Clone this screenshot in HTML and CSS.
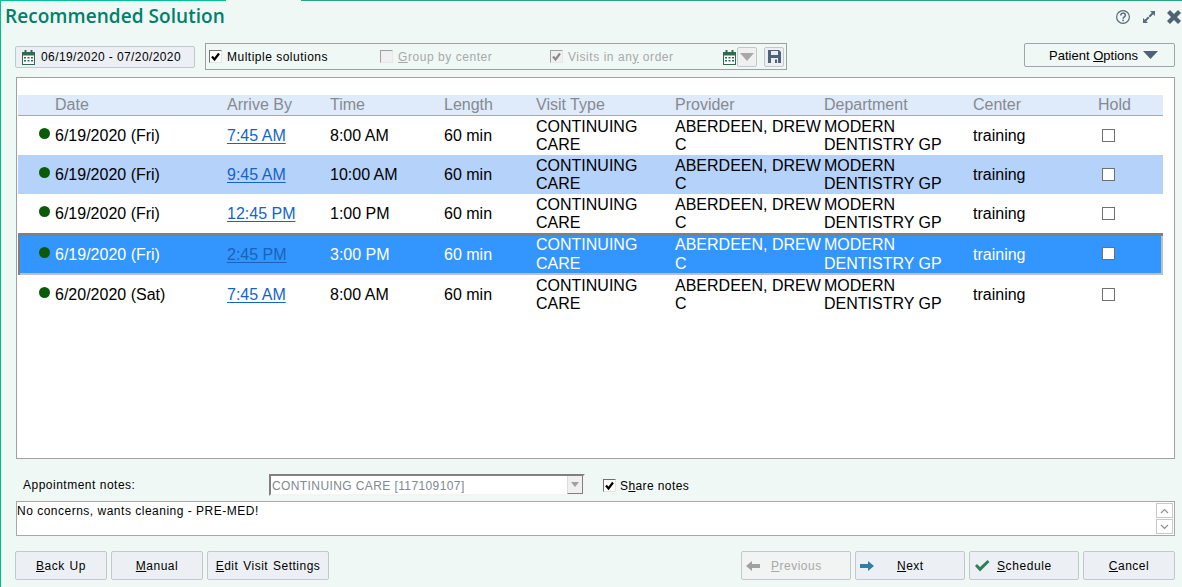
FILE: index.html
```html
<!DOCTYPE html>
<html lang="en">
<head>
    <meta charset="UTF-8">
    <title>Recommended Solution</title>
    <link rel="stylesheet" href="styles.css">
</head>
<body>
<div class="window">
    <div class="topline"><span class="seg-a"></span><span class="seg-b"></span><span class="seg-c"></span></div>

    <div class="titlebar">
        <h1 class="title">Recommended Solution</h1>
        <div class="win-icons">
            <svg width="16" height="16" viewBox="0 0 16 16"><circle cx="8" cy="8" r="6.4" fill="none" stroke="#5a6b7b" stroke-width="1.2"/><path d="M5.8 6.4c0-3 4.6-3 4.6-.2 0 1.7-2.3 1.7-2.3 3.6" fill="none" stroke="#5a6b7b" stroke-width="1.5"/><rect x="7.3" y="10.6" width="1.6" height="1.6" fill="#5a6b7b"/></svg>
            <svg width="14" height="14" viewBox="0 0 14 14"><path d="M8 1H13V6L11.2 4.2 8 7.4 6.6 6 9.8 2.8ZM6 13H1V8L2.8 9.8 6 6.6 7.4 8 4.2 11.2Z" fill="#5a6b7b"/></svg>
            <svg width="14" height="14" viewBox="0 0 14 14"><path d="M0 3 3 0 7 4 11 0 14 3 10 7 14 11 11 14 7 10 3 14 0 11 4 7Z" fill="#4f6375"/></svg>
        </div>
    </div>

    <div class="toolbar">
        <div class="date-range">
            <svg class="cal" width="13" height="15" viewBox="0 0 13 15"><path d="M0 2H2.5V0H4.5V2H8.5V0H10.5V2H13V15H0Z" fill="#2f6b4f"/><path d="M1 5.5H12V14H1Z" fill="#fff"/><path d="M2 7H4V8.5H2ZM5.5 7H7.5V8.5H5.5ZM9 7H11V8.5H9ZM2 10H4V11.5H2ZM5.5 10H7.5V11.5H5.5ZM9 10H11V11.5H9Z" fill="#2f6b4f"/></svg>
            <span>06/19/2020 - 07/20/2020</span>
        </div>
        <div class="options">
            <label class="opt opt-on">
                <span class="check"><svg width="11" height="11" viewBox="0 0 11 11"><path d="M2 5.5 4.5 8.5 9 2.5" fill="none" stroke="#000" stroke-width="2.2"/></svg></span>
                Multiple solutions
            </label>
            <label class="opt opt-off">
                <span class="check check-off"></span>
                <span><u>G</u>roup by center</span>
            </label>
            <label class="opt opt-off opt-last">
                <span class="check check-off"><svg width="11" height="11" viewBox="0 0 11 11"><path d="M2 5.5 4.5 8.5 9 2.5" fill="none" stroke="#8a8a8a" stroke-width="2.2"/></svg></span>
                <span>Visits in an<u>y</u> order</span>
            </label>
            <svg class="cal cal-small" width="13" height="15" viewBox="0 0 13 15"><path d="M0 2H2.5V0H4.5V2H8.5V0H10.5V2H13V15H0Z" fill="#2f6b4f"/><path d="M1 5.5H12V14H1Z" fill="#fff"/><path d="M2 7H4V8.5H2ZM5.5 7H7.5V8.5H5.5ZM9 7H11V8.5H9ZM2 10H4V11.5H2ZM5.5 10H7.5V11.5H5.5ZM9 10H11V11.5H9Z" fill="#2f6b4f"/></svg>
            <span class="mini-btn mini-drop"><svg width="14" height="8" viewBox="0 0 14 8"><path d="M0 0H14L7 8Z" fill="#a8a8a8"/></svg></span>
            <span class="mini-btn mini-save"><svg width="13" height="13" viewBox="0 0 13 13"><path d="M0 0H11L13 2V13H0Z" fill="#4f6375"/><path d="M3 1H10V5H3Z" fill="#e8eef2"/><path d="M3 8H10V13H3Z" fill="#e8eef2"/><path d="M7 9.5H9V13H7Z" fill="#4f6375"/></svg></span>
        </div>
        <div class="patient-options">
            <span>Patient <u>O</u>ptions</span>
            <svg width="15" height="8" viewBox="0 0 15 8"><path d="M0 0H15L7.5 8Z" fill="#4f6375"/></svg>
        </div>
    </div>

    <div class="frame">
        <div class="row-head">
            <div class="c-date">Date</div>
            <div>Arrive By</div>
            <div>Time</div>
            <div>Length</div>
            <div>Visit Type</div>
            <div>Provider</div>
            <div>Department</div>
            <div>Center</div>
            <div>Hold</div>
        </div>

        <div class="row">
            <div class="c-date"><span class="dot"></span>6/19/2020 (Fri)</div>
            <div><a class="time-link">7:45 AM</a></div>
            <div>8:00 AM</div>
            <div>60 min</div>
            <div>CONTINUING CARE</div>
            <div>ABERDEEN, DREW C</div>
            <div>MODERN DENTISTRY GP</div>
            <div>training</div>
            <div><span class="hold"></span></div>
        </div>
        <div class="row row-hover">
            <div class="c-date"><span class="dot"></span>6/19/2020 (Fri)</div>
            <div><a class="time-link">9:45 AM</a></div>
            <div>10:00 AM</div>
            <div>60 min</div>
            <div>CONTINUING CARE</div>
            <div>ABERDEEN, DREW C</div>
            <div>MODERN DENTISTRY GP</div>
            <div>training</div>
            <div><span class="hold"></span></div>
        </div>
        <div class="row">
            <div class="c-date"><span class="dot"></span>6/19/2020 (Fri)</div>
            <div><a class="time-link">12:45 PM</a></div>
            <div>1:00 PM</div>
            <div>60 min</div>
            <div>CONTINUING CARE</div>
            <div>ABERDEEN, DREW C</div>
            <div>MODERN DENTISTRY GP</div>
            <div>training</div>
            <div><span class="hold"></span></div>
        </div>
        <div class="row row-selected">
            <div class="c-date"><span class="dot"></span>6/19/2020 (Fri)</div>
            <div><a class="time-link">2:45 PM</a></div>
            <div>3:00 PM</div>
            <div>60 min</div>
            <div>CONTINUING CARE</div>
            <div>ABERDEEN, DREW C</div>
            <div>MODERN DENTISTRY GP</div>
            <div>training</div>
            <div><span class="hold"></span></div>
        </div>
        <div class="row">
            <div class="c-date"><span class="dot"></span>6/20/2020 (Sat)</div>
            <div><a class="time-link">7:45 AM</a></div>
            <div>8:00 AM</div>
            <div>60 min</div>
            <div>CONTINUING CARE</div>
            <div>ABERDEEN, DREW C</div>
            <div>MODERN DENTISTRY GP</div>
            <div>training</div>
            <div><span class="hold"></span></div>
        </div>
    </div>

    <div class="notes-row">
        <div class="notes-label">Appointment notes:</div>
        <div class="notes-select">
            <span class="notes-value">CONTINUING CARE [117109107]</span>
            <span class="notes-arrow"><svg width="8" height="5" viewBox="0 0 8 5"><path d="M0 0H8L4 5Z" fill="#a0a0a0"/></svg></span>
        </div>
        <label class="opt opt-on share">
            <span class="check"><svg width="11" height="11" viewBox="0 0 11 11"><path d="M2 5.5 4.5 8.5 9 2.5" fill="none" stroke="#000" stroke-width="2.2"/></svg></span>
            <span>S<u>h</u>are notes</span>
        </label>
    </div>

    <div class="notes-box">
        <div class="notes-text">No concerns, wants cleaning - PRE-MED!</div>
        <div class="scroller">
            <span class="scroll-btn"><svg width="9" height="6" viewBox="0 0 9 6"><path d="M1 5 4.5 1.5 8 5" fill="none" stroke="#909090" stroke-width="1.2"/></svg></span>
            <span class="scroll-btn"><svg width="9" height="6" viewBox="0 0 9 6"><path d="M1 1 4.5 4.5 8 1" fill="none" stroke="#909090" stroke-width="1.2"/></svg></span>
        </div>
    </div>

    <div class="actions">
        <button class="btn btn-small"><span><u>B</u>ack Up</span></button>
        <button class="btn btn-small"><span><u>M</u>anual</span></button>
        <button class="btn btn-edit"><span><u>E</u>dit Visit Settings</span></button>
        <div class="spacer"></div>
        <button class="btn btn-wide btn-disabled">
            <svg width="14" height="10" viewBox="0 0 14 10"><path d="M0 5 6 0V3H14V7H6V10Z" fill="#a0a0a0"/></svg>
            <span><u>P</u>revious</span>
        </button>
        <button class="btn btn-wide btn-next">
            <svg width="14" height="10" viewBox="0 0 14 10"><path d="M14 5 8 0V3H0V7H8V10Z" fill="#2f7ea8"/></svg>
            <span><u>N</u>ext</span>
        </button>
        <button class="btn btn-wide btn-schedule">
            <svg width="16" height="13" viewBox="0 0 16 13"><path d="M1 7 3 5 6 8 13.5 1 15.5 3 6 12.5Z" fill="#2e8058"/></svg>
            <span><u>S</u>chedule</span>
        </button>
        <button class="btn btn-small"><span><u>C</u>ancel</span></button>
    </div>
</div>
</body>
</html>
```

FILE: styles.css
```css
* {
    box-sizing: border-box;
}
html, body {
    margin: 0;
    padding: 0;
}
body {
    font-family: "Liberation Sans", Arial, sans-serif;
    font-size: 12px;
    color: #000;
    overflow: hidden;
}
.window {
    width: 1182px;
    height: 587px;
    background-color: #eff8f5;
    border-left: 1px solid #00bf94;
    display: flex;
    flex-direction: column;
    padding-right: 7px;
}

/* top line changes colour along the window */
.topline {
    display: flex;
    height: 1px;
    margin-right: -7px;
    flex-shrink: 0;
}
.seg-a {
    width: 225px;
    background-color: #00bf94;
}
.seg-b {
    width: 75px;
    background-color: #eff8f5;
}
.seg-c {
    flex-grow: 1;
    background-color: #2aa585;
}

.titlebar {
    display: flex;
    justify-content: space-between;
    align-items: flex-start;
    height: 42px;
    margin-right: -7px;
}
.title {
    margin: 2px 0 0 4px;
    font-family: "Open Sans", sans-serif;
    font-size: 19px;
    font-weight: 600;
    line-height: 26px;
    letter-spacing: .05px;
    color: #00806a;
}
.win-icons {
    display: flex;
    align-items: center;
    gap: 11px;
    margin: 8px 1px 0 0;
}

.toolbar {
    display: flex;
    align-items: flex-start;
    height: 34px;
    padding-left: 14px;
}
.date-range {
    display: flex;
    align-items: center;
    gap: 6px;
    width: 180px;
    height: 22px;
    margin-top: 3px;
    padding-left: 6px;
    background-color: #ecf0f4;
    border: 1px solid #c4c8cc;
    border-radius: 2px;
    letter-spacing: .4px;
}
.options {
    display: flex;
    align-items: center;
    width: 582px;
    height: 27px;
    margin-left: 10px;
    padding-left: 3px;
    border: 1px solid #a0a0a0;
}
.opt {
    display: flex;
    align-items: center;
    gap: 5px;
    width: 171px;
    letter-spacing: .5px;
}
.opt-off {
    width: 170px;
    color: #a8a8a8;
    letter-spacing: .55px;
}
.opt-last {
    width: 173px;
}
.check {
    display: flex;
    align-items: center;
    justify-content: center;
    width: 13px;
    height: 13px;
    background-color: #fff;
    border: 1px solid;
    border-color: #707070 #e4e4e4 #e4e4e4 #707070;
}
.check-off {
    background-color: #f0f0f0;
    border-color: #a0a0a0 #e8e8e8 #e8e8e8 #a0a0a0;
}
.cal-small {
    margin-top: 2px;
}
.mini-btn {
    display: flex;
    align-items: center;
    justify-content: center;
    width: 20px;
    height: 20px;
    border: 1px solid #c4c8cc;
    border-radius: 2px;
    background-color: #ecf0f4;
}
.mini-drop {
    margin-left: 1px;
    background-color: #f0f0f0;
}
.mini-save {
    margin-left: 7px;
}
.patient-options {
    display: flex;
    align-items: center;
    justify-content: flex-end;
    gap: 5px;
    width: 151px;
    height: 24px;
    margin-left: auto;
    padding-right: 16px;
    font-size: 13px;
    border: 1px solid #a0a4a8;
    border-radius: 2px;
}

.frame {
    height: 382px;
    margin-left: 15px;
    padding: 17px 11px 0 1px;
    background-color: #fff;
    border: 1px solid #a0a0a0;
}
.row-head, .row {
    display: grid;
    grid-template-columns: 209px 103px 114px 92px 139px 149px 149px 125px 64px;
    align-items: center;
    font-size: 16px;
}
.row-head {
    height: 21px;
    padding-bottom: 2px;
    line-height: 19px;
    color: #858a90;
    background-color: #dfeafb;
    border-bottom: 1px solid #a8a8a8;
}
.row {
    height: 39px;
    line-height: 18px;
}
.row-hover {
    background-color: #b5d2fb;
}
.row-selected {
    height: 42px;
    line-height: 19px;
    color: #fff;
    background-color: #3396ff;
    box-shadow: inset 2px 3px 0 #808080, inset -2px -2px 0 #c0c0c0;
}
.c-date {
    display: flex;
    align-items: center;
    padding-left: 37px;
}
.row .c-date {
    padding-left: 21px;
}
.dot {
    width: 11px;
    height: 11px;
    margin: 0 5px 4px 0;
    border-radius: 50%;
    background-color: #0a5a0a;
}
.time-link {
    color: #1464c8;
    text-decoration: underline;
    text-underline-offset: 2px;
}
.row-selected .time-link {
    color: #1a62b8;
}
.hold {
    display: block;
    width: 13px;
    height: 13px;
    margin-left: 4px;
    border: 1px solid #707070;
    background-color: #fff;
}
.row-selected .hold {
    margin-bottom: 2px;
}

.notes-row {
    display: flex;
    align-items: center;
    height: 22px;
    margin-top: 15px;
    padding-left: 22px;
}
.notes-label {
    width: 246px;
    letter-spacing: .5px;
}
.notes-select {
    display: flex;
    justify-content: space-between;
    width: 316px;
    height: 22px;
    background-color: #fff;
    border: 2px solid;
    border-color: #808080 #f4f4f4 #f4f4f4 #808080;
}
.notes-value {
    padding: 1px 0 0 1px;
    line-height: 19px;
    color: #808890;
    letter-spacing: .4px;
}
.notes-arrow {
    display: flex;
    align-items: center;
    justify-content: center;
    width: 16px;
    background-color: #f0f0f0;
    border-left: 1px solid #ddd;
    border-right: 1px solid #808080;
    border-bottom: 1px solid #808080;
}
.share {
    width: auto;
    gap: 4px;
    margin-left: 18px;
    letter-spacing: .4px;
    padding-top: 1px;
}
.notes-box {
    display: flex;
    justify-content: space-between;
    height: 35px;
    margin: 5px 0 0 15px;
    padding: 1px 1px 1px 0;
    background-color: #fff;
    border: 1px solid #a8a8a8;
}
.notes-text {
    padding-top: 1px;
    line-height: 15px;
    letter-spacing: .5px;
}
.scroller {
    display: flex;
    flex-direction: column;
    gap: 1px;
    width: 17px;
}
.scroll-btn {
    display: flex;
    align-items: center;
    justify-content: center;
    flex-grow: 1;
    border: 1px solid #c8c8c8;
}

.actions {
    display: flex;
    gap: 4px;
    margin-top: 15px;
    padding-left: 14px;
}
.spacer {
    flex-grow: 1;
}
.btn {
    display: flex;
    align-items: center;
    justify-content: center;
    height: 29px;
    padding: 0;
    font-family: inherit;
    font-size: 12px;
    letter-spacing: .5px;
    word-spacing: 1px;
    color: #000;
    background-color: #ecf0f4;
    border: 1px solid #c4c8cc;
    border-radius: 2px;
}
.btn-small {
    width: 92px;
}
.btn-edit {
    width: 122px;
}
.btn-wide {
    width: 110px;
    justify-content: flex-start;
    padding-left: 4px;
}
.btn-wide span {
    margin-left: 11px;
}
.btn-next span {
    margin-left: 23px;
}
.btn-schedule span {
    margin-left: 7px;
    letter-spacing: .6px;
}
.btn-disabled {
    color: #a8a8a8;
    background-color: #f2f3f3;
}
```
